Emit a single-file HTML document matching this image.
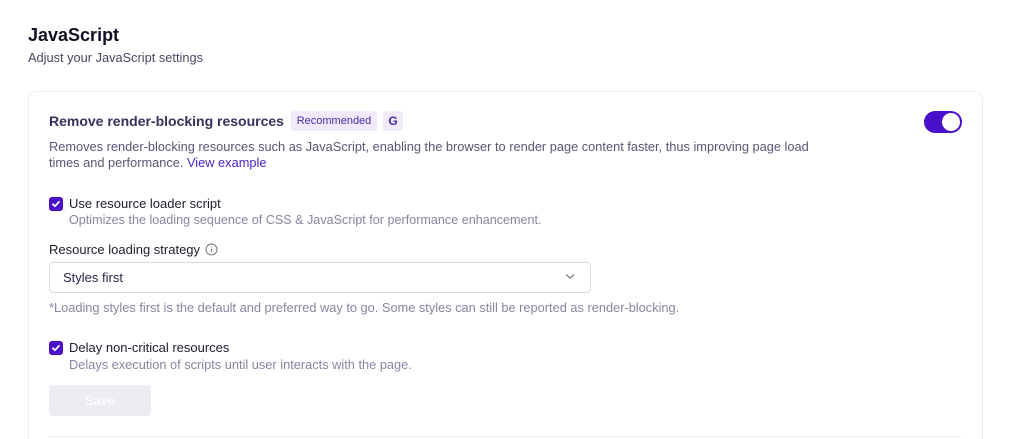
<!DOCTYPE html>
<html><head><style>
*{box-sizing:border-box;margin:0;padding:0}
html,body{width:1024px;height:439px;overflow:hidden}
body{background:#fff;font-family:"Liberation Sans",sans-serif;position:relative;color:#1e1b2e}
.a{position:absolute;white-space:nowrap}
.cb{position:absolute;width:14px;height:14px;border-radius:3px;background:#4a0fc9}
</style></head><body>
<div class="a" style="left:28px;top:25px;font-size:18px;font-weight:bold;color:#120f24">JavaScript</div>
<div class="a" style="left:28px;top:50px;font-size:12.8px;color:#4b4563">Adjust your JavaScript settings</div>
<div class="a" style="left:28px;top:91px;width:955px;height:348px;border:1px solid #ececf1;border-bottom:none;border-radius:8px 8px 0 0"></div>
<div class="a" style="left:49px;top:113px;font-size:14px;font-weight:bold;color:#3b2f5e">Remove render-blocking resources</div>
<div class="a" style="left:291px;top:111px;width:86px;height:20px;background:#efebfc;border-radius:3px;font-size:11px;color:#4a2aa8;text-align:center;line-height:20px">Recommended</div>
<div class="a" style="left:383px;top:111px;width:20px;height:20px;background:#efebfc;border-radius:3px;font-size:12px;font-weight:bold;color:#4a2aa8;text-align:center;line-height:20px">G</div>
<div class="a" style="left:924px;top:111px;width:38px;height:22px;background:#4a0fc9;border-radius:11px"><div style="position:absolute;right:2px;top:2px;width:18px;height:18px;border-radius:50%;background:#fff"></div></div>
<div class="a" style="left:49px;top:139px;font-size:12.8px;line-height:16px;color:#5b5478;white-space:normal;width:770px">Removes render-blocking resources such as JavaScript, enabling the browser to render page content faster, thus improving page load times and performance. <span style="color:#4a1fc9">View example</span></div>
<div class="cb" style="left:49px;top:197px"><svg width="14" height="14" viewBox="0 0 14 14"><path d="M4 7.2l2 2 4-4.4" stroke="#fff" stroke-width="1.8" fill="none" stroke-linecap="round" stroke-linejoin="round"/></svg></div>
<div class="a" style="left:69px;top:196px;font-size:13px;color:#1e1b2e">Use resource loader script</div>
<div class="a" style="left:69px;top:213px;font-size:12.6px;color:#8a84a3">Optimizes the loading sequence of CSS &amp; JavaScript for performance enhancement.</div>
<div class="a" style="left:49px;top:242px;font-size:13px;color:#1e1b2e">Resource loading strategy</div>
<svg class="a" style="left:205px;top:243px" width="13" height="13" viewBox="0 0 13 13"><circle cx="6.5" cy="6.5" r="5.5" stroke="#777" fill="none"/><path d="M6.5 5.8v3.5M6.5 3.6v.6" stroke="#777" stroke-width="1.1"/></svg>
<div class="a" style="left:49px;top:262px;width:542px;height:31px;border:1px solid #dcdbe3;border-radius:4px"></div>
<div class="a" style="left:63px;top:270px;font-size:13px;color:#2e2450">Styles first</div>
<svg class="a" style="left:565px;top:273px" width="10" height="7" viewBox="0 0 10 7"><path d="M1 1.5l4 3.5 4-3.5" stroke="#666" fill="none" stroke-width="1.1"/></svg>
<div class="a" style="left:49px;top:300px;font-size:12.8px;color:#8a84a3">*Loading styles first is the default and preferred way to go. Some styles can still be reported as render-blocking.</div>
<div class="cb" style="left:49px;top:341px"><svg width="14" height="14" viewBox="0 0 14 14"><path d="M4 7.2l2 2 4-4.4" stroke="#fff" stroke-width="1.8" fill="none" stroke-linecap="round" stroke-linejoin="round"/></svg></div>
<div class="a" style="left:69px;top:340px;font-size:13px;color:#1e1b2e">Delay non-critical resources</div>
<div class="a" style="left:69px;top:357px;font-size:12.8px;color:#8a84a3">Delays execution of scripts until user interacts with the page.</div>
<div class="a" style="left:49px;top:385px;width:102px;height:31px;background:#ededf1;border-radius:4px;color:#fff;font-size:13px;text-align:center;line-height:31px">Save</div>
<div class="a" style="left:49px;top:436px;width:913px;height:1px;background:#ececf1"></div>
</body></html>
